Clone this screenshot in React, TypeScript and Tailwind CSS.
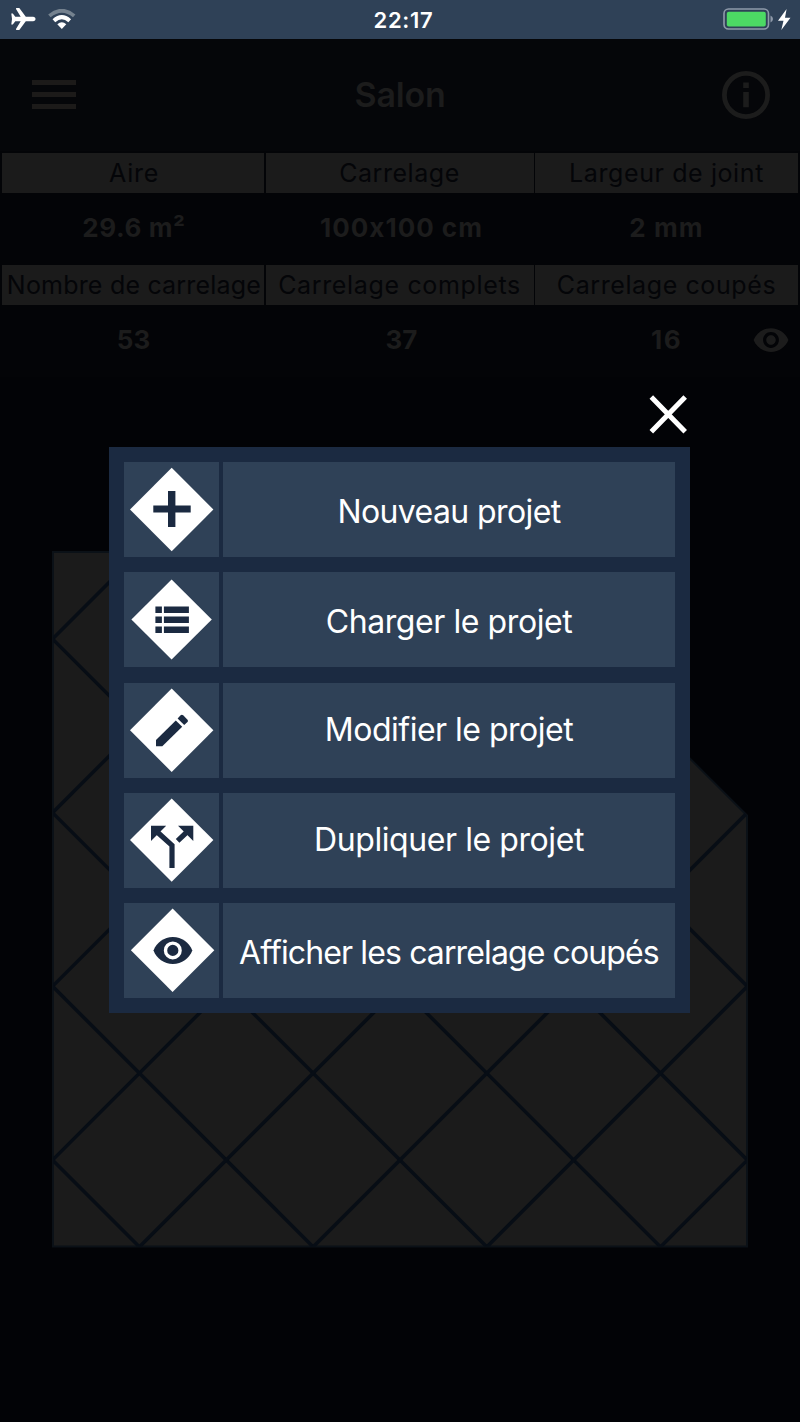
import { ReactNode } from 'react';
import { MdRemoveRedEye } from 'react-icons/md';

interface Stat {
  label: string;
  value: string;
  labelClass: string;
  valueClass: string;
  hasPreview?: boolean;
}

interface MenuItem {
  label: string;
  labelClass: string;
  icon: ReactNode;
}

const stats: Stat[] = [
  { label: 'Aire', value: '29.6 m²', labelClass: 'pl-0.5 tracking-[0.7px]', valueClass: 'pl-0.5 tracking-[0.6px]' },
  { label: 'Carrelage', value: '100x100 cm', labelClass: 'tracking-[0.55px]', valueClass: 'pl-1 tracking-[1px]' },
  { label: 'Largeur de joint', value: '2 mm', labelClass: 'tracking-[0.6px]', valueClass: 'tracking-[1.1px]' },
  { label: 'Nombre de carrelage', value: '53', labelClass: 'pl-0.5 tracking-[0.2px]', valueClass: 'pl-px' },
  { label: 'Carrelage complets', value: '37', labelClass: 'tracking-[0.65px]', valueClass: 'pl-1' },
  {
    label: 'Carrelage coupés',
    value: '16',
    labelClass: 'tracking-[0.6px]',
    valueClass: 'tracking-[1.5px]',
    hasPreview: true,
  },
];

const menuItems: MenuItem[] = [
  {
    label: 'Nouveau projet',
    labelClass: 'pt-1 tracking-[-0.6px]',
    icon: (
      <>
        <path d="M47.7 5.8 89.4 47.5 47.7 89.2 6 47.5z" fill="#fff" />
        <path d="M44 29h7.4v14.4h15.3v7.2H51.4V65H44V50.6H29.3v-7.2H44z" />
      </>
    ),
  },
  {
    label: 'Charger le projet',
    labelClass: 'pt-1 tracking-[-0.42px]',
    icon: (
      <>
        <path d="M47.6 7.4 87.8 47.5 47.6 87.6 7.4 47.5z" fill="#fff" />
        <path d="M31.4 34.5h6.5v6.4h-6.5zM31.4 44.5h6.5v6.4h-6.5zM31.4 54.5h6.5v6.4h-6.5z" />
        <path d="M39.9 34.5h25v6.4h-25zM39.9 44.5h25v6.4h-25zM39.9 54.5h25v6.4h-25z" />
      </>
    ),
  },
  {
    label: 'Modifier le projet',
    labelClass: 'tracking-[-0.5px]',
    icon: (
      <>
        <path d="M47.7 5.6 89.4 47.3 47.7 89 6 47.3z" fill="#fff" />
        <path d="M32 57v6.3h6.3L58.2 43.8 51.8 37.5z" />
        <path d="M53.6 35.6 56.6 32.3q1.2-1.1 2.6 0l4.3 4.4q1 1.2 0 2.4l-3.3 3z" />
      </>
    ),
  },
  {
    label: 'Dupliquer le projet',
    labelClass: 'tracking-[-0.42px]',
    icon: (
      <>
        <path d="M47.7 5.4 89.4 47.1 47.7 88.8 6 47.1z" fill="#fff" />
        <path d="M27 32.7h15.2L27 48zM54 32.7h15.3V48z" />
        <path d="M33.5 39.2 48 52.3V75M64 38 53.6 47.8" fill="none" stroke="#1b2a41" strokeWidth="5.2" />
      </>
    ),
  },
  {
    label: 'Afficher les carrelage coupés',
    labelClass: 'pt-1 tracking-[-0.88px]',
    icon: (
      <>
        <path d="M48.6 5.6 90.3 47.3 48.6 89 6.9 47.3z" fill="#fff" />
        <path d="M29.5 47.4C32.6 39.3 40 33.9 48.9 33.9S65.2 39.3 68.3 47.4C65.2 55.5 57.8 60.9 48.9 60.9S32.6 55.5 29.5 47.4z" />
        <circle cx="48.8" cy="47.4" r="7.3" fill="none" stroke="#fff" strokeWidth="3.4" />
      </>
    ),
  },
];

const StatusBar = () => (
  <div className="flex h-[38.5px] items-center justify-between bg-[#2f4157] pl-[11px] pr-[9px] text-white">
    <div className="flex w-[120px] items-center gap-3">
      <svg width="25" height="22" viewBox="0 0 25 22" fill="currentColor">
        <path d="M.3 5.4h1.5l2.5 3.4h5.4L5 1Q4.8.2 5.6 0H8.300l6.500 8.800h7.500q2.300.3 2.300 2.200t-2.300 2.200h-7.500L8.300 22H5.600Q4.800 21.800 5 21l4.700-7.800H4.300L1.800 16.600H.3l.7-5.600z" />
      </svg>
      <svg width="28" height="20" viewBox="0 0 28 20" fill="none">
        <path d="M1.4 6.900Q13.800-3.400 26.200 6.900" stroke="#75828f" strokeWidth="3.800" />
        <path d="M5.900 11.700Q13.800 4.500 21.700 11.700" stroke="#fff" strokeWidth="4" />
        <path d="M9.300 15.300q4.500-3.900 9 0L13.800 20z" fill="#fff" />
      </svg>
    </div>
    <span className="pl-[5px] pt-0.5 text-[22px] font-semibold tracking-[0.7px]">22:17</span>
    <div className="flex w-[120px] items-center justify-end gap-[5px]">
      <svg width="50" height="22" viewBox="0 0 50 22">
        <rect x="1" y="1" width="44.5" height="20" rx="4.5" fill="none" stroke="#8f9aaa" strokeWidth="1.6" />
        <rect x="3.8" y="3.7" width="39" height="14.8" rx="2" fill="#4cd964" />
        <path d="M47.5 7.5q2.5 1.2 2.5 3.5t-2.5 3.500z" fill="#8f9aaa" />
      </svg>
      <svg width="13" height="21" viewBox="0 0 13 21" fill="currentColor">
        <path d="M8.600 0 0 11.700h5.500L3.300 21 12.500 8.800H7z" />
      </svg>
    </div>
  </div>
);

const TopBar = () => (
  <header className="flex h-[112px] items-center justify-between bg-[#050609] pl-8 pr-[30px] text-[#1c1c1c]">
    <div className="flex w-12 flex-col gap-[7px]">
      <div className="h-[5px] w-11 bg-[#1c1a19]" />
      <div className="h-[5px] w-11 bg-[#1c1a19]" />
      <div className="h-[5px] w-11 bg-[#1c1a19]" />
    </div>
    <h1 className="-ml-0.5 text-[34px] font-semibold tracking-[-0.2px]">Salon</h1>
    <svg width="48" height="48" viewBox="0 0 48 48" fill="currentColor">
      <circle cx="24" cy="24" r="21.6" fill="none" stroke="currentColor" strokeWidth="4.8" />
      <path d="M21.200 11.400h5.600v5.600h-5.600zM21.200 21h5.600v15.200h-5.600z" />
    </svg>
  </header>
);

const StatTable = () => (
  <div className="grid grid-cols-[262px_268px_263px] gap-x-[1.5px] bg-[#030407] px-0.5 pt-0.5">
    {stats.map(({ label, value, labelClass, valueClass, hasPreview }) => (
      <div key={label} className="relative">
        <div className="flex h-[40.5px] items-center justify-center whitespace-nowrap bg-[#1b1b1b] pt-0.5 text-[25px] text-[#040508]">
          <span className={labelClass}>{label}</span>
        </div>
        <div className="flex h-[71.5px] items-center justify-center pb-[3px] text-[26px] font-bold text-[#1c1c1c]">
          <span className={valueClass}>{value}</span>
        </div>
        {hasPreview && <MdRemoveRedEye size={38} className="absolute right-2 top-14 text-[#1c1c1c]" />}
      </div>
    ))}
  </div>
);

const joints = [0, 1, 2, 3, 4, 5, 6, 7];

// Room outline covered with tiles laid at 45°
const TilePlan = () => (
  <svg className="mx-auto mt-[174px] block" width="696" height="697" viewBox="52 550.5 696 697">
    <clipPath id="room">
      <path d="M53 551.5H483L747 815V1246H53z" />
    </clipPath>
    <path d="M53 551.5H483L747 815V1246H53z" fill="#1b1b1b" stroke="#0b1117" strokeWidth="2" />
    <g clipPath="url(#room)" stroke="#070d15" strokeWidth="3.5">
      {joints.map((n) => {
        const down = 238.5 + n * 173.7;
        const up = 691 + n * 173.7;
        return (
          <g key={n}>
            <path d={`M0 ${down}L800 ${down + 800}`} />
            <path d={`M0 ${up}L800 ${up - 800}`} />
          </g>
        );
      })}
    </g>
  </svg>
);

const ProjectMenu = () => (
  <div className="absolute left-[109px] top-[395px] w-[581px]">
    <div className="flex h-[52px] justify-end pr-0.5">
      <svg width="39" height="39" viewBox="0 0 39 39" stroke="#fff" strokeWidth="5">
        <path d="M2.300 2 36.200 36.700M36.200 2 2.300 36.700" />
      </svg>
    </div>
    <div className="flex flex-col gap-[15.3px] bg-[#1b2a41] p-[15px]">
      {menuItems.map(({ label, labelClass, icon }) => (
        <div key={label} className="flex h-[95px] gap-1">
          <div className="w-[95px] shrink-0 bg-[#2f4157]">
            <svg width="95" height="95" viewBox="0 0 95 95" fill="#1b2a41">
              {icon}
            </svg>
          </div>
          <div
            className={`flex flex-1 items-center justify-center whitespace-nowrap bg-[#2f4157] text-[32px] text-white ${labelClass}`}
          >
            {label}
          </div>
        </div>
      ))}
    </div>
  </div>
);

const App = () => (
  <div className="relative h-[1422px] w-[800px] overflow-hidden bg-[#020306] font-[Inter,sans-serif]">
    <StatusBar />
    <TopBar />
    <StatTable />
    <TilePlan />
    <ProjectMenu />
  </div>
);

export default App;
